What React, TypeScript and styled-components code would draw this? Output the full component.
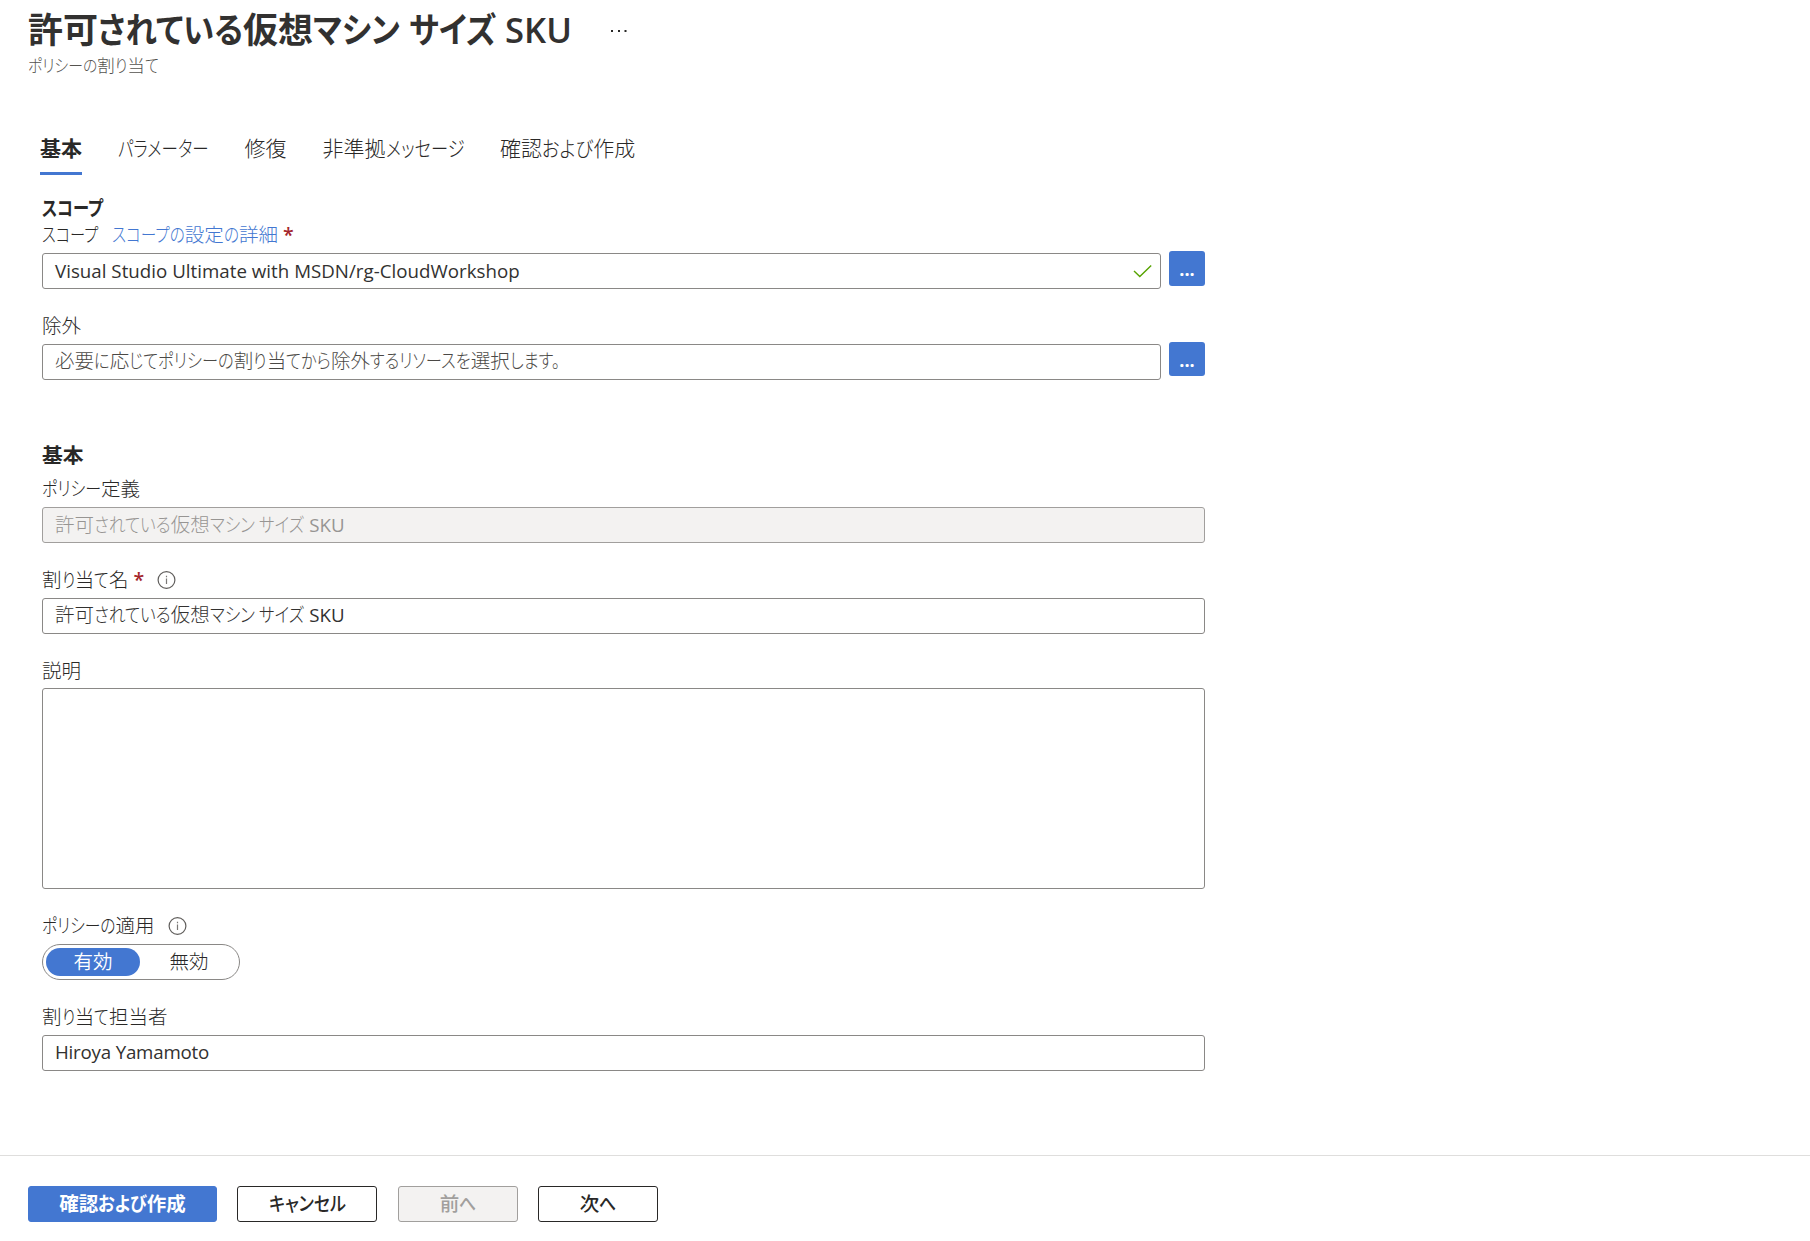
import React, { useLayoutEffect, useRef, useState } from "react";
import styled, { createGlobalStyle } from "styled-components";

const ink = "#292827";
const softInk = "#323130";
const blue = "#4377d1";

const GlobalStyle = createGlobalStyle`
  *, *::before, *::after { box-sizing: border-box; }
  body {
    margin: 0;
    background: #fff;
    color: ${ink};
    font-family: "Open Sans", "Noto Sans CJK JP", sans-serif;
    font-size: 19.5px;
    font-weight: 300;
    font-feature-settings: "palt";
  }
`;

/* ---------- text with condensed kana ---------- */

const Line = styled.span<{ $spacing?: number }>`
  white-space: pre;
  letter-spacing: ${(p) => p.$spacing ?? 0}px;
`;
const Latin = styled.span<{ $weight: number; $size: number }>`
  font-size: ${(p) => p.$size}em;
  font-weight: ${(p) => p.$weight};
`;
const KanaSlot = styled.span`
  display: inline-block;
`;
const KanaRun = styled.span<{ $scale: number }>`
  display: inline-block;
  transform: scaleX(${(p) => p.$scale});
  transform-origin: left center;
`;

function Kana({ text, scale }: { text: string; scale: number }) {
  const ref = useRef<HTMLSpanElement>(null);
  const [width, setWidth] = useState<number | undefined>();
  useLayoutEffect(() => {
    setWidth(ref.current!.getBoundingClientRect().width);
  }, [text, scale]);
  return (
    <KanaSlot style={{ width }}>
      <KanaRun ref={ref} $scale={scale}>{text}</KanaRun>
    </KanaSlot>
  );
}

type TextProps = { children: string; kana?: number; latin?: number; latinSize?: number; spacing?: number };

function Text({ children, kana = 0.82, latin = 380, latinSize = 0.96, spacing }: TextProps) {
  const runs = children.match(/[\u3040-\u30ff。]+|[\x20-\x7e]+|[^\u3040-\u30ff。\x20-\x7e]+/g) ?? [];
  return (
    <Line $spacing={spacing}>
      {runs.map((run, i) =>
        /^[\u3040-\u30ff。]/.test(run) ? (
          <Kana key={i} text={run} scale={kana} />
        ) : /^[\x20-\x7e]/.test(run) ? (
          <Latin key={i} $weight={latin} $size={latinSize}>{run}</Latin>
        ) : (
          run
        )
      )}
    </Line>
  );
}

/* ---------- page ---------- */

const Page = styled.div`
  display: flex;
  flex-direction: column;
  height: 1241px;
  overflow: hidden;
`;
const Header = styled.header`
  padding: 8px 28px 0;
  height: 133px;
`;
const TitleRow = styled.div`
  display: flex;
  align-items: center;
  gap: 37px;
  height: 42px;
`;
const Title = styled.h1`
  margin: 0;
  color: ${softInk};
  font-size: 35px;
  line-height: 43px;
  font-weight: 600;
`;
const MoreSlot = styled.span`
  display: flex;
  padding-top: 4px;
`;
const Subtitle = styled.div`
  margin-top: 3px;
  font-size: 17.5px;
  line-height: 24px;
  color: #55534f;
`;

const Tabs = styled.nav`
  display: flex;
  gap: 36px;
  padding-left: 40px;
  height: 42px;
`;
const Tab = styled.a<{ $active?: boolean }>`
  height: 42px;
  line-height: 31px;
  font-size: 21px;
  font-weight: ${(p) => (p.$active ? 600 : 300)};
  border-bottom: 3px solid ${(p) => (p.$active ? blue : "transparent")};
`;

const Form = styled.main`
  flex: 1;
  width: 1205px;
  padding: 20px 0 0 42px;
`;
const Heading = styled.h2`
  margin: 0;
  height: 26px;
  line-height: 26px;
  font-size: 20.8px;
  font-weight: 600;
`;
const Section = styled.section<{ $top?: number }>`
  display: flex;
  flex-direction: column;
  gap: 23px;
  margin-top: ${(p) => p.$top ?? 0}px;
`;
const Field = styled.div<{ $gap?: number }>`
  display: flex;
  flex-direction: column;
  gap: ${(p) => p.$gap ?? 6}px;
`;
const HeadedField = styled.div`
  display: flex;
  flex-direction: column;
  gap: 7px;
`;
const Label = styled.div`
  display: flex;
  align-items: center;
  height: 26px;
  padding-top: 2px;
  line-height: 24px;
`;
const Link = styled.a`
  margin-left: 14px;
  color: ${blue};
`;
const Star = styled.span`
  margin-left: 5px;
  color: #a4262c;
  font-weight: 600;
`;
const InfoSlot = styled.span`
  display: flex;
  margin-left: 13px;
`;
const Row = styled.div`
  display: flex;
  gap: 8px;
  height: 36px;
`;
const Input = styled.div<{ $state?: "disabled" | "placeholder"; $raised?: boolean }>`
  display: flex;
  flex: 1;
  align-items: center;
  justify-content: space-between;
  height: 36px;
  padding: 0 8px ${(p) => (p.$raised ? 2 : 0)}px 12px;
  border: 1px solid ${(p) => (p.$state === "disabled" ? "#a19f9d" : "#8a8886")};
  border-radius: 3px;
  background: ${(p) => (p.$state === "disabled" ? "#f3f2f1" : "#fff")};
  color: ${(p) => (p.$state === "disabled" ? "#979593" : p.$state === "placeholder" ? "#4b4946" : softInk)};
  line-height: 32px;
`;
const FullInput = styled(Input)`
  flex: none;
`;
const Area = styled.div`
  height: 201px;
  border: 1px solid #8a8886;
  border-radius: 3px;
`;
const Picker = styled.button<{ $height: number }>`
  width: 36px;
  height: ${(p) => p.$height}px;
  margin-top: -2px;
  padding: 0;
  border: 0;
  border-radius: 3px;
  background: ${blue};
  color: #fff;
  font: 700 18px/36px "Open Sans", sans-serif;
`;
const Toggle = styled.div`
  display: flex;
  width: 198px;
  height: 36px;
  padding: 3px;
  border: 1px solid #8a8886;
  border-radius: 18px;
`;
const Option = styled.span<{ $on?: boolean }>`
  flex: ${(p) => (p.$on ? "0 0 94px" : "1")};
  height: 28px;
  padding-left: ${(p) => (p.$on ? 0 : 2)}px;
  border-radius: 14px;
  background: ${(p) => (p.$on ? blue : "transparent")};
  color: ${(p) => (p.$on ? "#fff" : ink)};
  font-weight: ${(p) => (p.$on ? 350 : 300)};
  line-height: 27px;
  text-align: center;
`;

const Footer = styled.footer`
  display: flex;
  gap: 20px;
  height: 86px;
  padding: 30px 28px 0;
  border-top: 1px solid #dfdedd;
`;
const Button = styled.button<{ $width: number; $kind?: "primary" | "disabled" }>`
  width: ${(p) => p.$width}px;
  height: 36px;
  padding: 0;
  border: 1px solid ${(p) => (p.$kind === "primary" ? blue : p.$kind === "disabled" ? "#a19f9d" : ink)};
  border-radius: 3px;
  background: ${(p) => (p.$kind === "primary" ? blue : p.$kind === "disabled" ? "#f3f2f1" : "#fff")};
  color: ${(p) => (p.$kind === "primary" ? "#fff" : p.$kind === "disabled" ? "#a19f9d" : ink)};
  font-family: inherit;
  font-feature-settings: inherit;
  font-size: 19.5px;
  font-weight: ${(p) => (p.$kind === "primary" ? 600 : 500)};
  line-height: 34px;

  &:nth-child(2) {
    margin-right: 1px;
  }
`;

const Info = () => (
  <InfoSlot>
    <svg width="19" height="19" viewBox="0 0 19 19" fill="none" stroke="#605e5c" strokeWidth="1.2">
      <circle cx="9.5" cy="9" r="8.4" />
      <path d="M9.5 7.5v5.5M9.5 4.8v1.4" stroke="#7a7876" />
    </svg>
  </InfoSlot>
);
const Check = () => (
  <svg width="19" height="14" viewBox="0 0 19 14" fill="none" stroke="#57a300" strokeWidth="1.4">
    <path d="M1 7l5.8 5.6L18.2 1.4" />
  </svg>
);
const More = () => (
  <MoreSlot>
    <svg width="20" height="4" viewBox="0 0 20 4" fill={ink}>
      <rect x="2" y="1" width="2" height="2" />
      <rect x="9" y="1" width="2" height="2" />
      <rect x="15.5" y="1" width="2" height="2" />
    </svg>
  </MoreSlot>
);

export default function App() {
  return (
    <>
      <GlobalStyle />
      <Page>
        <Header>
          <TitleRow>
            <Title><Text kana={0.895} latin={600} latinSize={0.99}>許可されている仮想マシン サイズ SKU</Text></Title>
            <More />
          </TitleRow>
          <Subtitle><Text kana={0.85}>ポリシーの割り当て</Text></Subtitle>
        </Header>
        <Tabs>
          <Tab $active>基本</Tab>
          <Tab><Text kana={0.785}>パラメーター</Text></Tab>
          <Tab>修復</Tab>
          <Tab><Text>非準拠メッセージ</Text></Tab>
          <Tab><Text kana={0.87}>確認および作成</Text></Tab>
        </Tabs>
        <Form>
          <Heading><Text kana={0.78}>スコープ</Text></Heading>
          <Section>
            <Field>
              <Label>
                <Text kana={0.78}>スコープ</Text>
                <Link><Text kana={0.8}>スコープの設定の詳細</Text></Link>
                <Star>*</Star>
              </Label>
              <Row>
                <Input><Text spacing={0.02}>Visual Studio Ultimate with MSDN/rg-CloudWorkshop</Text><Check /></Input>
                <Picker $height={35}>...</Picker>
              </Row>
            </Field>
            <Field>
              <Label>除外</Label>
              <Row>
                <Input $state="placeholder" $raised><Text kana={0.832}>必要に応じてポリシーの割り当てから除外するリソースを選択します。</Text></Input>
                <Picker $height={34}>...</Picker>
              </Row>
            </Field>
          </Section>
          <Section $top={62}>
            <HeadedField>
              <Heading>基本</Heading>
              <Field>
                <Label><Text>ポリシー定義</Text></Label>
                <FullInput $state="disabled"><Text kana={0.85}>許可されている仮想マシン サイズ SKU</Text></FullInput>
              </Field>
            </HeadedField>
            <Field>
              <Label><Text>割り当て名</Text><Star>*</Star><Info /></Label>
              <FullInput $raised><Text kana={0.85}>許可されている仮想マシン サイズ SKU</Text></FullInput>
            </Field>
            <Field $gap={5}>
              <Label>説明</Label>
              <Area />
            </Field>
            <Field>
              <Label><Text kana={0.81}>ポリシーの適用</Text><Info /></Label>
              <Toggle><Option $on>有効</Option><Option>無効</Option></Toggle>
            </Field>
            <Field>
              <Label><Text>割り当て担当者</Text></Label>
              <FullInput $raised><Text spacing={-0.2}>Hiroya Yamamoto</Text></FullInput>
            </Field>
          </Section>
        </Form>
        <Footer>
          <Button $width={189} $kind="primary"><Text kana={0.88}>確認および作成</Text></Button>
          <Button $width={140}><Text kana={0.87}>キャンセル</Text></Button>
          <Button $width={120} $kind="disabled"><Text kana={0.87}>前へ</Text></Button>
          <Button $width={120}><Text kana={0.87}>次へ</Text></Button>
        </Footer>
      </Page>
    </>
  );
}
